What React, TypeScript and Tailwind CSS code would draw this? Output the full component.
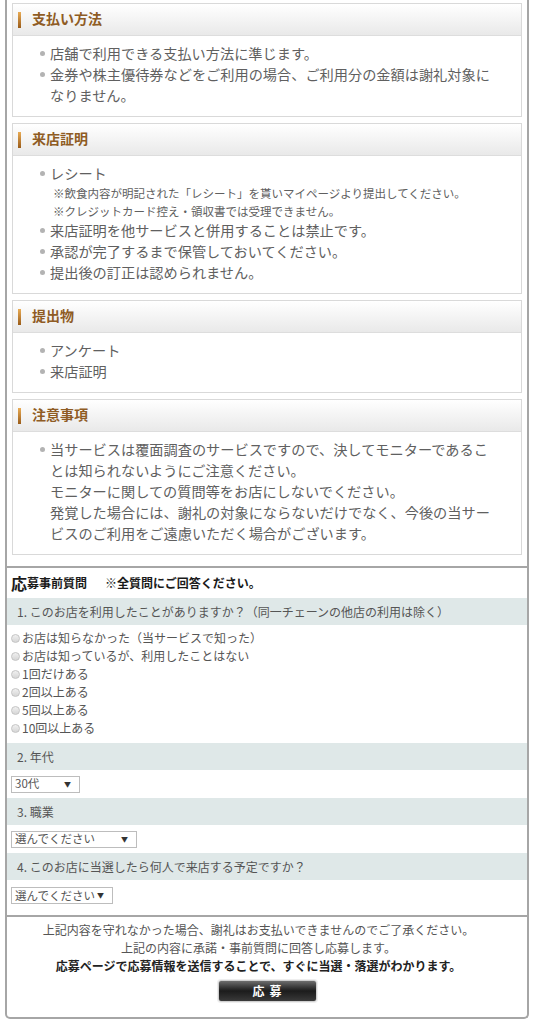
import React from 'react';

type Section = {
  title: string;
  items: { text: React.ReactNode; notes?: string[] }[];
};

const SECTIONS: Section[] = [
  {
    title: '支払い方法',
    items: [
      { text: '店舗で利用できる支払い方法に準じます。' },
      { text: '金券や株主優待券などをご利用の場合、ご利用分の金額は謝礼対象になりません。' },
    ],
  },
  {
    title: '来店証明',
    items: [
      {
        text: 'レシート',
        notes: [
          '※飲食内容が明記された「レシート」を貰いマイページより提出してください。',
          '※クレジットカード控え・領収書では受理できません。',
        ],
      },
      { text: '来店証明を他サービスと併用することは禁止です。' },
      { text: '承認が完了するまで保管しておいてください。' },
      { text: '提出後の訂正は認められません。' },
    ],
  },
  {
    title: '提出物',
    items: [{ text: 'アンケート' }, { text: '来店証明' }],
  },
  {
    title: '注意事項',
    items: [
      {
        text: (
          <>
            当サービスは覆面調査のサービスですので、決してモニターであることは知られないようにご注意ください。
            <br />
            モニターに関しての質問等をお店にしないでください。
            <br />
            発覚した場合には、謝礼の対象にならないだけでなく、今後の当サービスのご利用をご遠慮いただく場合がございます。
          </>
        ),
      },
    ],
  },
];

const VISIT_OPTIONS = [
  'お店は知らなかった（当サービスで知った）',
  'お店は知っているが、利用したことはない',
  '1回だけある',
  '2回以上ある',
  '5回以上ある',
  '10回以上ある',
];

function InfoBox({ section }: { section: Section }) {
  return (
    <div className="border border-[#d9d9d9] bg-white">
      <div className="h-[32px] flex items-center bg-gradient-to-b from-white to-[#e9e9e9] border-b border-[#dddddd]">
        <span className="ml-[5px] w-[3px] h-[16px] bg-gradient-to-b from-[#e9ac55] to-[#9a5c18]" />
        <span className="ml-[11px] -mt-[2px] text-[14px] font-bold text-[#8f5c24]">{section.title}</span>
      </div>
      <ul className="pl-[27px] pr-[24px] pt-[7px] pb-[10px] text-[14.2px] leading-[21px] text-[#606060]">
        {section.items.map((item, i) => (
          <li key={i} className="flex">
            <span className="w-[10px] h-[21px] shrink-0 flex items-center">
              <span className="w-[5px] h-[5px] rounded-full bg-[#b3b3b3]" />
            </span>
            <div>
              {item.text}
              {item.notes && (
                <div className="pl-[3px] text-[11.5px] leading-[18px]">
                  {item.notes.map((n) => (
                    <div key={n}>{n}</div>
                  ))}
                </div>
              )}
            </div>
          </li>
        ))}
      </ul>
    </div>
  );
}

function QuestionBar({ children }: { children: React.ReactNode }) {
  return (
    <div className="h-[27px] flex items-center pl-[10px] bg-[#dfe8e8] text-[12px] text-[#555555]">
      {children}
    </div>
  );
}

function FakeSelect({ value, width }: { value: string; width: string }) {
  return (
    <div className={`h-[17px] ${width} flex items-center justify-between pl-[3px] pr-[8px] border border-[#bdbdbd] bg-white text-[11.5px] text-[#555555] leading-none`}>
      <span>{value}</span>
      <span className="text-[7px] text-[#333333]">▼</span>
    </div>
  );
}

export default function App() {
  return (
    <div className="min-h-screen bg-white font-['Noto_Sans_CJK_JP',sans-serif]">
      <div className="mx-[5px] border-x-2 border-b-2 border-[#a6a6a6] rounded-b-[5px]">
        {/* Info boxes */}
        <div className="px-[5px] pt-[3px] pb-[11px] flex flex-col gap-[6px]">
          {SECTIONS.map((s) => (
            <InfoBox key={s.title} section={s} />
          ))}
        </div>

        {/* Pre-application questions */}
        <div className="border-t-2 border-[#a6a6a6]">
          <div className="h-[30px] flex items-center pl-[4px] font-bold text-[#1a1a1a]">
            <span className="text-[16px]">応</span>
            <span className="text-[12px]">募事前質問</span>
            <span className="ml-[18px] text-[12px]">※全質問にご回答ください。</span>
          </div>

          <QuestionBar>1. このお店を利用したことがありますか？（同一チェーンの他店の利用は除く）</QuestionBar>
          <div className="pt-[4px] pb-[6px] pl-[4px] text-[12px] leading-[18px] text-[#555555]">
            {VISIT_OPTIONS.map((o) => (
              <label key={o} className="flex items-center">
                <span className="w-[9px] h-[9px] rounded-full border border-[#c4c4c4] bg-gradient-to-b from-[#f0f0f0] to-[#d6d6d6] mr-[2px]" />
                {o}
              </label>
            ))}
          </div>

          <QuestionBar>2. 年代</QuestionBar>
          <div className="h-[28px] flex items-center pl-[4px]">
            <FakeSelect value="30代" width="w-[69px]" />
          </div>

          <QuestionBar>3. 職業</QuestionBar>
          <div className="h-[28px] flex items-center pl-[4px]">
            <FakeSelect value="選んでください" width="w-[126px]" />
          </div>

          <QuestionBar>4. このお店に当選したら何人で来店する予定ですか？</QuestionBar>
          <div className="pt-[7px] pb-[11px] pl-[4px]">
            <FakeSelect value="選んでください" width="w-[102px]" />
          </div>
        </div>

        {/* Footer */}
        <div className="border-t-2 border-[#a6a6a6] pt-[4px] pb-[15px] flex flex-col items-center">
          <div className="pr-[17px] text-center text-[12px] leading-[18px] text-[#555555]">
            <p>上記内容を守れなかった場合、謝礼はお支払いできませんのでご了承ください。</p>
            <p>上記の内容に承諾・事前質問に回答し応募します。</p>
            <p className="font-bold text-[#222222]">応募ページで応募情報を送信することで、すぐに当選・落選がわかります。</p>
          </div>
          <button className="mt-[5px] w-[99px] h-[22px] rounded-[3px] border border-[#cfcfcf] bg-gradient-to-b from-[#6e6e6e] via-[#1c1c1c] to-[#3a3a3a] text-white text-[12px] font-bold tracking-[5px] pl-[5px] shadow-[0_0_0_1px_#eeeeee]">
            応募
          </button>
        </div>
      </div>
    </div>
  );
}
